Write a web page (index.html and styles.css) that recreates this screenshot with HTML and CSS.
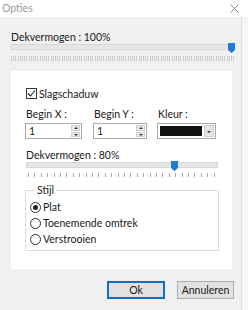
FILE: index.html
```html
<!DOCTYPE html>
<html>
<head>
<meta charset="utf-8">
<link rel="stylesheet" href="styles.css">
</head>
<body>
<div class="titlebar">
  <span class="title">Opties</span>
  <svg class="close" width="9" height="9" viewBox="0 0 9 9"><path d="M0.5 0.5 L8.5 8.5 M8.5 0.5 L0.5 8.5" stroke="#8c8c8c" stroke-width="1" fill="none"/></svg>
</div>
<div class="frame">
  <div class="content">
    <div class="label">Dekvermogen : 100%</div>
    <div class="slider wide">
      <div class="track"></div>
      <div class="thumb" style="left:217px"></div>
      <div class="ticks dense"></div>
    </div>

    <div class="panel">
      <label class="check-row">
        <span class="checkbox"><svg width="9" height="9" viewBox="0 0 9 9"><path d="M1 4.5 L3.5 7 L8 1.5" stroke="#222" stroke-width="1.1" fill="none"/></svg></span>
        <span>Slagschaduw</span>
      </label>

      <div class="fields">
        <div class="field fx">
          <div class="label">Begin X :</div>
          <div class="spin">
            <span class="val">1</span>
            <span class="spin-btns"><span class="up"></span><span class="down"></span></span>
          </div>
        </div>
        <div class="field fy">
          <div class="label">Begin Y :</div>
          <div class="spin">
            <span class="val">1</span>
            <span class="spin-btns"><span class="up"></span><span class="down"></span></span>
          </div>
        </div>
        <div class="field fc">
          <div class="label">Kleur :</div>
          <div class="combo">
            <span class="swatch"></span>
            <span class="drop"></span>
          </div>
        </div>
      </div>

      <div class="label op">Dekvermogen : 80%</div>
      <div class="slider narrow">
        <div class="track"></div>
        <div class="thumb" style="left:145px"></div>
        <div class="ticks sparse"></div>
      </div>

      <fieldset class="group">
        <legend>Stijl</legend>
        <div class="radio-row"><span class="radio on"></span><span>Plat</span></div>
        <div class="radio-row"><span class="radio"></span><span>Toenemende omtrek</span></div>
        <div class="radio-row"><span class="radio"></span><span>Verstrooien</span></div>
      </fieldset>
    </div>

    <div class="buttons">
      <button class="btn ok">Ok</button>
      <button class="btn">Annuleren</button>
    </div>
  </div>
</div>
</body>
</html>
```
FILE: styles.css
```css
* { box-sizing: border-box; margin: 0; padding: 0; }
html, body { width: 248px; height: 310px; overflow: hidden; }
body {
  background: #f6f6f6;
  font-family: Lato, "Open Sans", sans-serif;
  font-size: 10.5px;
  color: #1a1a1a;
}
.titlebar {
  height: 17px;
  background: #fff;
  display: flex;
  align-items: center;
  justify-content: space-between;
  padding: 0 9px 0 2px;
}
.title { color: #9a9a9a; line-height: 13px; }
.close { display: block; }
.frame { display: flex; height: 293px; }
.content {
  width: 242px;
  height: 293px;
  background: #f0f0f0;
  border-right: 1px solid #dcdcdc;
  padding: 14px 0 0 11px;
}
.label { line-height: 13px; height: 13px; white-space: nowrap; }

.slider { position: relative; }
.slider.wide { width: 224px; }
.slider.narrow { width: 192px; margin-left: 1px; }
.track {
  height: 6px;
  background: #e6e6e6;
  border: 1px solid #d7d7d7;
}
.thumb {
  position: absolute;
  top: -1px;
  width: 7px;
  height: 10px;
  background: #1b7bd6;
  clip-path: polygon(0 0, 100% 0, 100% 70%, 50% 100%, 0 70%);
}
.ticks { height: 5px; margin-top: 6px; }
.ticks.dense {
  background: repeating-linear-gradient(to right, #cccccc 0 1px, transparent 1px 2.2px);
}
.ticks.sparse {
  height: 4px;
  margin-top: 5px;
  background: repeating-linear-gradient(to right, #a8a8a8 0 1px, transparent 1px 6.4px);
  margin-left: 2px;
}

.panel {
  margin-top: 10px;
  width: 221px;
  height: 198px;
  background: #fff;
  padding: 16px 0 0 14px;
}
.check-row { display: flex; align-items: center; gap: 2px; height: 13px; margin-left: 1px; }
.checkbox {
  width: 11px; height: 11px;
  border: 1px solid #333;
  display: flex; align-items: center; justify-content: center;
  background: #fff;
}
.checkbox svg { display: block; }

.fields { display: flex; margin-top: 8px; }
.field .label { margin-left: 1px; }
.fx { width: 57px; }
.fy { width: 54px; margin-left: 11px; }
.fc { width: 59px; margin-left: 10px; }
.spin, .combo {
  margin-top: 2px;
  height: 16px;
  border: 1px solid #a9a9a9;
  background: #fff;
  display: flex;
  align-items: stretch;
}
.val { flex: 1; padding-left: 3px; line-height: 14px; }
.spin-btns {
  width: 9px;
  margin: 1px 1px 1px 0;
  display: flex; flex-direction: column; gap: 1px;
}
.spin-btns span {
  flex: 1;
  background: #e8e8e8;
  border: 1px solid #cfcfcf;
  position: relative;
}
.spin-btns .up::after, .spin-btns .down::after {
  content: "";
  position: absolute;
  left: 1.5px; top: 1px;
  border-left: 2px solid transparent;
  border-right: 2px solid transparent;
}
.spin-btns .up::after { border-bottom: 2px solid #333; }
.spin-btns .down::after { border-top: 2px solid #333; }
.combo { padding: 1px; gap: 1px; }
.swatch { flex: 1; background: #111; margin: 1px; }
.drop {
  width: 10px;
  background: #e5e5e5;
  border: 1px solid #cfcfcf;
  position: relative;
}
.drop::after {
  content: "";
  position: absolute;
  left: 2px; top: 5px;
  border-left: 2px solid transparent;
  border-right: 2px solid transparent;
  border-top: 2px solid #333;
}

.label.op { margin-top: 10px; margin-left: 1px; }

.group {
  margin-top: 7px;
  width: 194px;
  border: 1px solid #dcdcdc;
  padding: 2px 0 3px 4px;
}
.group legend {
  margin-left: 5px;
  padding: 0 2px;
  line-height: 13px;
}
.radio-row { display: flex; align-items: center; gap: 2px; height: 16px; }
.radio {
  width: 11px; height: 11px;
  border: 1px solid #333;
  border-radius: 50%;
  background: #fff;
  position: relative;
}
.radio.on::after {
  content: "";
  position: absolute;
  left: 2px; top: 2px;
  width: 5px; height: 5px;
  border-radius: 50%;
  background: #222;
}

.buttons {
  display: flex;
  justify-content: flex-end;
  gap: 12px;
  width: 224px;
  padding-right: 1px;
  margin-top: 12px;
}
.btn {
  height: 18px;
  font-family: inherit;
  font-size: 10.5px;
  color: #1a1a1a;
  background: #e1e1e1;
  border: 1px solid #adadad;
  width: 57px;
}
.btn.ok {
  width: 58px;
  border: 2px solid #0c6fc4;
}
```
